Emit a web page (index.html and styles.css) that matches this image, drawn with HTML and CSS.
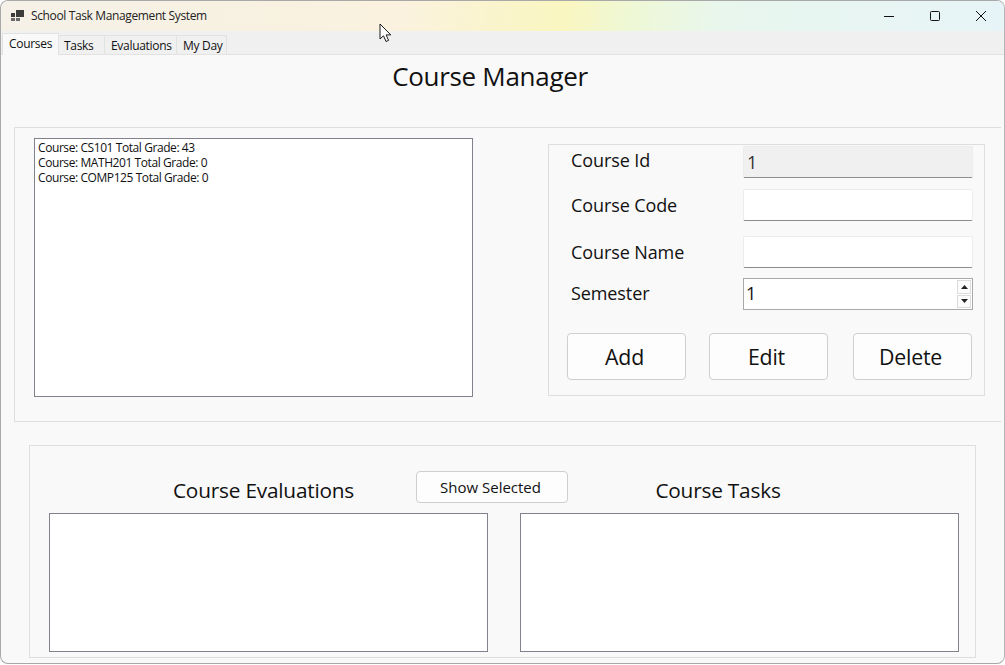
FILE: index.html
```html
<!DOCTYPE html>
<html lang="en">
<head>
  <meta charset="UTF-8" />
  <title>School Task Management System</title>
  <link rel="stylesheet" href="styles.css">
</head>
<body>

  <div class="window">
    <div class="titlebar">
      <svg class="app-icon" width="14" height="12" viewBox="0 0 14 12" aria-hidden="true">
        <rect x="5" y="0" width="8" height="7" fill="#3c3c3c" />
        <rect x="0" y="3" width="4" height="4" fill="#3c3c3c" />
        <rect x="0" y="8" width="4" height="3" fill="#6a6a6a" />
        <rect x="5" y="8" width="4" height="3" fill="#6a6a6a" />
      </svg>
      <span class="app-title">School Task Management System</span>
      <div class="window-buttons">
        <svg width="12" height="12" viewBox="0 0 12 12" aria-hidden="true"><path d="M1 6.500h10" stroke="#111" fill="none" /></svg>
        <svg width="12" height="12" viewBox="0 0 12 12" aria-hidden="true"><rect x="1.500" y="1.500" width="9" height="9" rx="1" stroke="#111" fill="none" /></svg>
        <svg width="12" height="12" viewBox="0 0 12 12" aria-hidden="true"><path d="M1 1l10 10M11 1L1 11" stroke="#111" fill="none" /></svg>
      </div>
    </div>

    <div class="tabs">
      <div class="tab tab-active tab-courses">Courses</div>
      <div class="tab tab-tasks">Tasks</div>
      <div class="tab tab-evals">Evaluations</div>
      <div class="tab tab-day">My Day</div>
    </div>

    <div class="page">
      <h1 class="page-title">Course Manager</h1>

      <div class="group group-top">
        <div class="listbox listbox-courses">
          <div>Course: CS101 Total Grade: 43</div>
          <div>Course: MATH201 Total Grade: 0</div>
          <div>Course: COMP125 Total Grade: 0</div>
        </div>

        <div class="form-group">
          <div class="row row-id">
            <label>Course Id</label>
            <div class="field field-disabled">1</div>
          </div>
          <div class="row row-code">
            <label>Course Code</label>
            <div class="field"></div>
          </div>
          <div class="row row-name">
            <label>Course Name</label>
            <div class="field"></div>
          </div>
          <div class="row row-semester">
            <label>Semester</label>
            <div class="spinner">
              <span>1</span>
              <div class="spin-buttons">
                <div class="spin-btn"><svg width="7" height="4" viewBox="0 0 7 4" aria-hidden="true"><path d="M3.500 0L7 4H0z" fill="#222" /></svg></div>
                <div class="spin-btn"><svg width="7" height="4" viewBox="0 0 7 4" aria-hidden="true"><path d="M0 0h7L3.500 4z" fill="#222" /></svg></div>
              </div>
            </div>
          </div>
          <div class="actions">
            <button class="btn btn-big">Add</button>
            <button class="btn btn-big">Edit</button>
            <button class="btn btn-big">Delete</button>
          </div>
        </div>
      </div>

      <div class="group group-bottom">
        <div class="bottom-heads">
          <h2 class="sub-title sub-evals">Course Evaluations</h2>
          <button class="btn btn-show">Show Selected</button>
          <h2 class="sub-title sub-tasks">Course Tasks</h2>
        </div>
        <div class="bottom-lists">
          <div class="listbox"></div>
          <div class="listbox"></div>
        </div>
      </div>
    </div>

    <!-- mouse pointer caught in the shot -->
    <svg class="cursor" width="13" height="20" viewBox="0 0 13 20" aria-hidden="true">
      <path d="M1 1v15l3.500-3.200 2.500 5.700 2.600-1.100-2.500-5.500h4.700z" fill="#fff" stroke="#1a1a1a" />
    </svg>
  </div>

</body>
</html>
```

FILE: styles.css
```css
html, body {
  margin: 0;
  padding: 0;
  overflow: hidden;
  background: #fff;
  font-family: "Open Sans", "Noto Sans", sans-serif;
  color: #111;
}
.window {
  position: relative;
  width: 1005px;
  height: 664px;
  box-sizing: border-box;
  display: flex;
  flex-direction: column;
  border: 1px solid #a8a8a8;
  border-right-color: #b5b5b5;
  border-radius: 8px;
  overflow: hidden;
  background: #f9f9f9;
}
.titlebar {
  height: 30px;
  flex-shrink: 0;
  display: flex;
  align-items: center;
  padding-left: 10px;
  background: linear-gradient(100deg, #f5f1e8 0%, #faf2de 40%, #faf6c0 56%, #eef8d6 63%, #e8f6ee 72%, #e7f4f7 100%);
}
.app-icon {
  margin-right: 6px;
}
.app-title {
  font-size: 12px;
  letter-spacing: -0.37px;
  color: #222;
  margin-top: -2px;
}
.window-buttons {
  margin-left: auto;
  display: flex;
  gap: 34px;
  padding-right: 17px;
  align-items: center;
}
.tabs {
  height: 23px;
  flex-shrink: 0;
  display: flex;
  align-items: flex-end;
  padding-left: 1px;
  background: #f0f0f0;
  border-bottom: 1px solid #e2e2e2;
  box-sizing: content-box;
}
.tab {
  height: 19px;
  box-sizing: border-box;
  font-size: 12px;
  letter-spacing: -0.3px;
  line-height: 19px;
  padding-left: 5px;
  background: #f0f0f0;
  border: 1px solid #e2e2e2;
  border-bottom: none;
  border-left: none;
}
.tab-active {
  height: 22px;
  line-height: 19px;
  background: #f9f9f9;
  border-left: 1px solid #e2e2e2;
  margin-bottom: -1px;
  padding-left: 6px;
}
.tab-courses { width: 57px; }
.tab-tasks { width: 46px; padding-left: 5px; }
.tab-evals { width: 72px; padding-left: 6px; }
.tab-day { width: 50px; padding-left: 6px; }
.page {
  flex: 1;
  min-height: 0;
  padding-top: 4px;
}
.page-title {
  margin: 0 0 33px 0;
  height: 35px;
  line-height: 35px;
  width: 978px;
  text-align: center;
  font-size: 26px;
  font-weight: 400;
  letter-spacing: -0.3px;
}
.group {
  box-sizing: border-box;
  border: 1px solid #dedede;
}
.group-top {
  margin-left: 13px;
  width: 987px;
  height: 295px;
  border-right: none;
  display: flex;
  align-items: flex-start;
  padding: 10px 0 0 19px;
}
.listbox {
  box-sizing: border-box;
  width: 439px;
  background: #fff;
  border: 1px solid #82828c;
}
.listbox-courses {
  height: 259px;
  padding: 1px 3px;
  font-size: 12px;
  letter-spacing: -0.42px;
  line-height: 15px;
}
.form-group {
  box-sizing: border-box;
  width: 437px;
  height: 252px;
  margin: 6px 0 0 75px;
  border: 1px solid #dedede;
}
.row {
  display: flex;
  align-items: center;
  justify-content: space-between;
  padding: 0 11px 0 22px;
}
.row label {
  font-size: 18px;
  letter-spacing: -0.1px;
}
.row-id { margin-top: 1px; }
.row-id label { margin-top: -5px; }
.row-code { margin-top: 11px; }
.row-name { margin-top: 15px; }
.row-semester { margin-top: 10px; }
.row-semester label { margin-top: -3px; }
.field {
  box-sizing: border-box;
  width: 230px;
  height: 32px;
  background: #fff;
  border: 1px solid #ececec;
  border-bottom: 1px solid #8c8c8c;
  border-radius: 2px;
  font-size: 18px;
  line-height: 30px;
  padding-left: 3px;
}
.field-disabled {
  background: #f0f0f0;
  color: #333;
}
.spinner {
  box-sizing: border-box;
  width: 230px;
  height: 32px;
  background: #fff;
  border: 1px solid #a8a8a8;
  font-size: 18px;
  line-height: 29px;
  padding-left: 2px;
  display: flex;
  justify-content: space-between;
}
.spin-buttons {
  display: flex;
  flex-direction: column;
  padding: 1px 1px 1px 0;
  gap: 1px;
}
.spin-btn {
  box-sizing: border-box;
  width: 14px;
  height: 14px;
  border: 1px solid #dcdcdc;
  background: #fbfbfb;
  display: flex;
  align-items: center;
  justify-content: center;
}
.actions {
  display: flex;
  gap: 23px;
  margin: 23px 0 0 18px;
}
.actions .btn + .btn + .btn {
  margin-left: 2px;
}
.btn {
  box-sizing: border-box;
  background: #fdfdfd;
  border: 1px solid #cfcfcf;
  border-radius: 4px;
  font-family: inherit;
  color: #111;
  padding: 0;
}
.btn-big {
  width: 119px;
  height: 47px;
  padding-right: 4px;
  padding-bottom: 1px;
  font-size: 21.300px;
  letter-spacing: -0.2px;
}
.group-bottom {
  margin: 23px 0 0 28px;
  width: 947px;
  height: 213px;
  padding: 25px 16px 0 19px;
}
.bottom-heads {
  display: flex;
  align-items: flex-start;
  height: 42px;
}
.sub-title {
  margin: 0;
  font-size: 20.800px;
  font-weight: 400;
  letter-spacing: -0.2px;
  line-height: 28px;
  padding-top: 5px;
  text-align: center;
}
.sub-evals { width: 305px; margin-left: 62px; }
.sub-tasks { width: 300px; }
.btn-show {
  width: 152px;
  height: 32px;
  padding-right: 3px;
  font-size: 15px;
}
.bottom-lists {
  display: flex;
  gap: 32px;
}
.bottom-lists .listbox {
  height: 139px;
}
.cursor {
  position: absolute;
  left: 378px;
  top: 22px;
}
```
